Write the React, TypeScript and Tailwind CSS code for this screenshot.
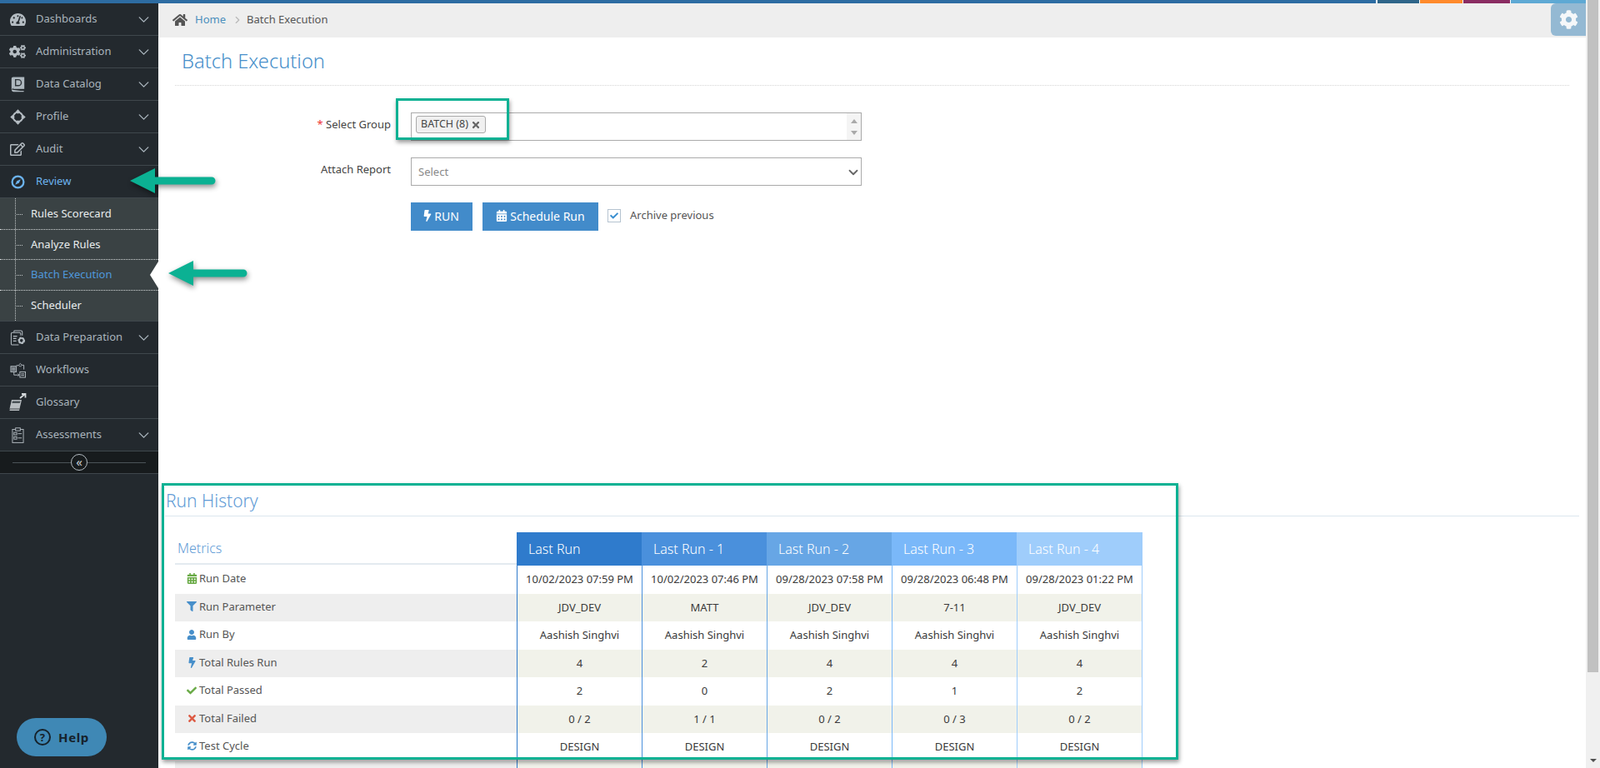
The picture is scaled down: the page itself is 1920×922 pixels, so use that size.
import type { ReactNode } from "react";
import { ChevronDown, ChevronRight } from "lucide-react";
import {
  FaBolt,
  FaCalendarAlt,
  FaCheck,
  FaCog,
  FaCogs,
  FaFilter,
  FaHome,
  FaRegEdit,
  FaSyncAlt,
  FaTachometerAlt,
  FaTimes,
  FaUser,
} from "react-icons/fa";

/* ─────────────────────────────── hand drawn sidebar icons ───────────── */

function BookD() {
  return (
    <svg viewBox="0 0 18 20" className="w-[17px] h-[19px]">
      <path d="M1.500 16.500V2.500a1.500 1.500 0 0 1 1.500-1.500h13.500v14H3.500a1.800 1.800 0 0 0 0 3.600h13" fill="#aeb8bf" stroke="#aeb8bf" strokeWidth="1.300" />
      <path d="M1.500 16.800a1.800 1.800 0 0 1 2-1.800" fill="none" stroke="#23292e" strokeWidth="0.700" />
      <path d="M6 3.800h3.500a3.800 3.800 0 0 1 0 7.600H6z" fill="none" stroke="#2d3338" strokeWidth="1.500" />
    </svg>
  );
}

function ProfileMark() {
  return (
    <svg viewBox="0 0 20 20" className="w-[19px] h-[19px]" fill="currentColor">
      <circle cx="10" cy="10" r="6" fill="none" stroke="currentColor" strokeWidth="2.200" />
      <path d="M10 0.300l2.700 2.900L10 6.100 7.300 3.200zM10 13.900l2.700 2.900-2.700 2.900-2.700-2.900zM0.300 10l2.900-2.700L6.100 10l-2.900 2.700zM13.900 10l2.900-2.700 2.900 2.700-2.900 2.700z" />
    </svg>
  );
}

function CompassMark() {
  return (
    <svg viewBox="0 0 18 18" className="w-[17px] h-[17px]">
      <circle cx="9" cy="9" r="7.300" fill="none" stroke="#6cb3ee" strokeWidth="2.400" />
      <path d="M12.500 5.500L10.300 10.300 5.500 12.500 7.700 7.700z" fill="#6cb3ee" />
    </svg>
  );
}

function DataPrep() {
  return (
    <svg viewBox="0 0 20 20" className="w-[19px] h-[19px]" fill="none" stroke="currentColor" strokeWidth="1.100">
      <path d="M11 19H3a1.500 1.500 0 0 1-1.500-1.500V5A1.500 1.500 0 0 1 3 3.500h9A1.500 1.500 0 0 1 13.500 5v2" />
      <path d="M5 3V2a1 1 0 0 1 1-1h8a1.500 1.500 0 0 1 1.500 1.500V7" />
      <path d="M4 8h5M4 11h4M4 14h4" strokeWidth="1.400" />
      <circle cx="14.500" cy="13.500" r="3.200" stroke="currentColor" strokeWidth="2.600" strokeDasharray="2.200 0.900" />
      <circle cx="14.500" cy="13.500" r="3" strokeWidth="1.600" />
    </svg>
  );
}

function FlowMark() {
  return (
    <svg viewBox="0 0 20 20" className="w-[19px] h-[19px]" fill="none" stroke="currentColor" strokeWidth="1">
      <rect x="1" y="5" width="7" height="7" fill="currentColor" fillOpacity="0.35" />
      <path d="M2.500 7.500h4M2.500 9.500h4" />
      <path d="M11 3.500l2-2 2 2-2 2z" />
      <path d="M8 4h3M15 3.500h2.500V9" />
      <rect x="12.500" y="12" width="7" height="7" />
      <path d="M14 14.500h4M14 16.500h4" />
      <path d="M5 12v4h6.500M10 14.500l1.600 1.500-1.600 1.500" />
    </svg>
  );
}

function GlossaryMark() {
  return (
    <svg viewBox="0 0 24 24" className="w-[24px] h-[24px]">
      <path d="M5 9h12l-3 13H2z" fill="#b9bec2" />
      <path d="M6 10.500h9.500l-.6 2.500H5.400z" fill="#4b5358" />
      <path d="M2 22l.5-2h12" stroke="#23292e" strokeWidth="0.800" fill="none" />
      <path d="M15 7l6-5M17 2h4.500v4.500" stroke="#d5d9dc" strokeWidth="1.800" fill="none" />
    </svg>
  );
}

function ClipboardMark() {
  return (
    <svg viewBox="0 0 16 20" className="w-[15px] h-[19px]" fill="none" stroke="currentColor" strokeWidth="1">
      <rect x="1" y="2.500" width="14" height="17" />
      <rect x="5" y="0.700" width="6" height="3.500" fill="#23292e" />
      <rect x="3" y="6.500" width="3.500" height="3" />
      <rect x="3" y="12" width="3.500" height="3" />
      <path d="M8 8h5M8 13.500h5" />
    </svg>
  );
}

/* ─────────────────────────────── sidebar ────────────────────────────── */

type NavItem = { label: string; icon: ReactNode; caret?: boolean; active?: boolean };

const NAV_TOP: NavItem[] = [
  { label: "Dashboards", icon: <FaTachometerAlt className="text-[19px]" />, caret: true },
  { label: "Administration", icon: <FaCogs className="text-[20px]" />, caret: true },
  { label: "Data Catalog", icon: <BookD />, caret: true },
  { label: "Profile", icon: <ProfileMark />, caret: true },
  { label: "Audit", icon: <FaRegEdit className="text-[18px]" />, caret: true },
  { label: "Review", icon: <CompassMark />, active: true },
];

const NAV_BOTTOM: NavItem[] = [
  { label: "Data Preparation", icon: <DataPrep />, caret: true },
  { label: "Workflows", icon: <FlowMark /> },
  { label: "Glossary", icon: <GlossaryMark /> },
  { label: "Assessments", icon: <ClipboardMark />, caret: true },
];

const SUB_ITEMS = [
  { label: "Rules Scorecard", h: "h-[38px]" },
  { label: "Analyze Rules", h: "h-[36px]" },
  { label: "Batch Execution", h: "h-[37px]", active: true },
  { label: "Scheduler", h: "h-[36px]" },
];

function NavRow({ item }: { item: NavItem }) {
  return (
    <div className="flex items-center h-[39px] border-b border-[#3f474c]">
      <span className="w-[43px] shrink-0 flex justify-center pr-[1px] text-[#b4bcc2]">{item.icon}</span>
      <span className={"flex-1 text-[13px] " + (item.active ? "text-[#6cb3ee]" : "text-[#a9b4bc]")}>{item.label}</span>
      {item.caret && <ChevronDown className="w-[21px] h-[21px] mr-[7px] text-[#a9b4bc]" strokeWidth={1.6} />}
    </div>
  );
}

function Sidebar() {
  return (
    <aside className="relative w-[190px] shrink-0 bg-[#23292e] h-[918px]">
      {NAV_TOP.map((n) => (
        <NavRow key={n.label} item={n} />
      ))}
      <div className="relative border-b border-[#3f474c] bg-[#3a4244]">
        <div className="absolute left-[18px] top-0 bottom-0 border-l border-dotted border-[#c5cacb]" />
        {SUB_ITEMS.map((s, i) => (
          <div
            key={s.label}
            className={
              "relative flex items-center pl-[37px] text-[13px] " +
              s.h +
              " " +
              (i < 3 ? "border-b border-dotted border-[#d5d9da] " : "") +
              (s.active ? "text-[#4f98dc]" : "text-[#e9edee]")
            }
          >
            <span className="absolute left-[20px] top-1/2 w-[7px] border-t border-dotted border-[#c5cacb]" />
            {s.label}
            {s.active && (
              <span className="absolute right-0 top-[2px] border-y-[16px] border-r-[10px] border-y-transparent border-r-white" />
            )}
          </div>
        ))}
      </div>
      {NAV_BOTTOM.map((n) => (
        <NavRow key={n.label} item={n} />
      ))}
      <div className="flex items-center h-[27px] px-[15px] bg-[#171b1d] border-b border-[#3f474c]">
        <span className="flex-1 border-t border-[#4b5358]" />
        <span className="w-[20px] h-[20px] rounded-full border border-[#b4bcc2] flex items-center justify-center text-[15px] leading-none text-[#c6ccd0] pb-[2px]">
          «
        </span>
        <span className="flex-1 border-t border-[#4b5358]" />
      </div>
      <button
        type="button"
        className="absolute left-[20px] top-[858px] w-[108px] h-[46px] rounded-full bg-[#3f88b5] flex items-center justify-center gap-[9px] text-[#16222b] font-['Roboto',sans-serif] font-bold text-[15px] tracking-[0.6px]"
      >
        <span className="w-[20px] h-[20px] rounded-full border-2 border-[#16222b] flex items-center justify-center text-[13px] leading-none">?</span>
        Help
      </button>
    </aside>
  );
}

/* ─────────────────────────────── run history ────────────────────────── */

const COLUMNS = [
  { title: "Last Run", head: "bg-[#2f7bcc]", line: "border-[#2f7bcc]" },
  { title: "Last Run - 1", head: "bg-[#4a90dc]", line: "border-[#4a90dc]" },
  { title: "Last Run - 2", head: "bg-[#67a6e5]", line: "border-[#67a6e5]" },
  { title: "Last Run - 3", head: "bg-[#7ab8f9]", line: "border-[#7ab8f9]" },
  { title: "Last Run - 4", head: "bg-[#9fcdfb]", line: "border-[#9fcdfb]" },
];

const METRICS: { label: string; icon: ReactNode; values: string[] }[] = [
  {
    label: "Run Date",
    icon: <FaCalendarAlt className="text-[13px] text-[#69aa46]" />,
    values: ["10/02/2023 07:59 PM", "10/02/2023 07:46 PM", "09/28/2023 07:58 PM", "09/28/2023 06:48 PM", "09/28/2023 01:22 PM"],
  },
  {
    label: "Run Parameter",
    icon: <FaFilter className="text-[12px] text-[#478fca]" />,
    values: ["JDV_DEV", "MATT", "JDV_DEV", "7-11", "JDV_DEV"],
  },
  {
    label: "Run By",
    icon: <FaUser className="text-[12px] text-[#478fca]" />,
    values: ["Aashish Singhvi", "Aashish Singhvi", "Aashish Singhvi", "Aashish Singhvi", "Aashish Singhvi"],
  },
  {
    label: "Total Rules Run",
    icon: <FaBolt className="text-[13px] text-[#478fca]" />,
    values: ["4", "2", "4", "4", "4"],
  },
  {
    label: "Total Passed",
    icon: <FaCheck className="text-[12px] text-[#69aa46]" />,
    values: ["2", "0", "2", "1", "2"],
  },
  {
    label: "Total Failed",
    icon: <FaTimes className="text-[13px] text-[#dd5a43]" />,
    values: ["0 / 2", "1 / 1", "0 / 2", "0 / 3", "0 / 2"],
  },
  {
    label: "Test Cycle",
    icon: <FaSyncAlt className="text-[11px] text-[#478fca]" />,
    values: ["DESIGN", "DESIGN", "DESIGN", "DESIGN", "DESIGN"],
  },
  { label: "", icon: null, values: ["", "", "", "", ""] },
];

function RunHistory() {
  return (
    <div className="mt-[19px] grid grid-cols-[410px_repeat(4,150px)_151px]">
      <div className="h-[39px] pt-[5px] pl-[3px] border-b-2 border-[#e3eaf0] text-[16px] leading-[28px] font-light text-[#5f9bd6]">
        Metrics
      </div>
      {COLUMNS.map((c) => (
        <div key={c.title} className={"h-[40px] flex items-center pl-[14px] pb-[1px] text-[16px] font-light text-white " + c.head}>
          {c.title}
        </div>
      ))}
      {METRICS.map((m, r) => {
        const grey = r % 2 === 1;
        return [
          <div
            key={"m" + r}
            className={"flex items-center h-[33.5px] text-[13px] text-[#555] pb-[2px] " + (grey ? "bg-[#eeeeee]" : "bg-white")}
          >
            <span className="w-[29px] pl-[11px] flex justify-center shrink-0">{m.icon}</span>
            {m.label}
          </div>,
          ...m.values.map((v, i) => (
            <div
              key={r + "-" + i}
              className={
                "flex items-center justify-center h-[33.5px] text-[13px] text-[#3a3a3a] border-l " +
                COLUMNS[i].line +
                " " +
                (i === 4 ? "border-r " : "") +
                (grey ? "bg-[#f1f2ea]" : "bg-white")
              }
            >
              {v}
            </div>
          )),
        ];
      })}
    </div>
  );
}

/* ─────────────────────────────── annotations ────────────────────────── */

function GreenArrow({ len, className }: { len: number; className: string }) {
  return (
    <svg viewBox={`0 0 ${len} 32`} className={"absolute h-[32px] drop-shadow-[1px_3px_3px_rgba(0,0,0,0.45)] " + className}>
      <path d={`M1 16L31 1v10.500h${len - 36}a4.500 4.500 0 0 1 0 9H31V31z`} fill="#0bb193" />
    </svg>
  );
}

/* ─────────────────────────────── page ───────────────────────────────── */

export default function App() {
  return (
    <div className="relative flex w-[1920px] h-[922px] overflow-hidden bg-white font-['Open_Sans',sans-serif]">
      <div className="w-[1903px] shrink-0">
        <div className="flex h-[4px] gap-[1px] bg-white">
          <div className="flex-1 bg-[#2d6ca2]" />
          <div className="w-[50px] ml-[1px] bg-[#2e6589]" />
          <div className="w-[51px] bg-[#ff8a2b]" />
          <div className="w-[56px] bg-[#8a2c62]" />
          <div className="w-[90px] bg-[#5ea9d4]" />
        </div>
        <div className="flex">
          <Sidebar />
          <main className="flex-1 min-w-0">
            <div className="flex items-center h-[41px] bg-[#eeeeee] pl-[17px] pb-[2px] text-[13px]">
              <FaHome className="text-[18px] text-[#555]" />
              <span className="ml-[9px] text-[#4c8fbd]">Home</span>
              <ChevronRight className="w-[14px] h-[14px] ml-[7px] text-[#b8b8b8]" />
              <span className="ml-[4px] text-[#555]">Batch Execution</span>
            </div>

            <div className="px-[20px]">
              <h1 className="h-[58px] pl-[8px] pt-[10px] text-[23.700px] leading-[36px] font-light text-[#478fca] border-b border-dotted border-[#d5d5d5]">
                Batch Execution
              </h1>

              <div className="mt-[32px] flex h-[34px]">
                <label className="w-[259px] text-right pt-[5px] text-[13px] text-[#444]">
                  <span className="text-[#e33]">*</span> Select Group
                </label>
                <div className="ml-[24px] w-[541px] flex items-start border border-[#aaaaaa] pl-[5px]">
                  <span className="flex items-center gap-[3px] h-[21px] mt-[3px] px-[5px] rounded-[3px] border border-[#aaaaaa] bg-[#f0f0f0] text-[12.500px] text-[#444]">
                    BATCH (8)
                    <FaTimes className="text-[12px] text-[#666]" />
                  </span>
                  <span className="ml-auto w-[17px] h-full bg-[#f4f4f4] flex flex-col items-center justify-center gap-[9px]">
                    <span className="border-x-[4px] border-b-[5px] border-x-transparent border-b-[#a9a9a9]" />
                    <span className="border-x-[4px] border-t-[5px] border-x-transparent border-t-[#a9a9a9]" />
                  </span>
                </div>
              </div>

              <div className="mt-[20px] flex h-[34px]">
                <label className="w-[259px] text-right pt-[5px] text-[13px] text-[#444]">Attach Report</label>
                <div className="ml-[24px] w-[541px] flex items-center border border-[#aaaaaa] pl-[8px] text-[13px] text-[#888] pt-[2px]">
                  Select
                  <ChevronDown className="ml-auto w-[18px] h-[18px] text-[#666]" strokeWidth={2.4} />
                </div>
              </div>

              <div className="mt-[20px] flex items-center h-[34px] pl-[283px]">
                <button type="button" className="flex items-center justify-center gap-[1px] w-[74px] h-[34px] pb-[2px] pr-[3px] bg-[#428bca] text-[14px] text-white">
                  <FaBolt className="text-[14px]" />
                  RUN
                </button>
                <button type="button" className="flex items-center justify-center gap-[3px] ml-[12px] w-[139px] h-[34px] pb-[2px] bg-[#428bca] text-[14px] text-white">
                  <FaCalendarAlt className="text-[14px]" />
                  Schedule Run
                </button>
                <span className="ml-[11px] w-[16px] h-[16px] border border-[#b5c3d0] flex items-center justify-center bg-white -mt-[2px]">
                  <FaCheck className="text-[10px] text-[#3a8fd0]" />
                </span>
                <span className="ml-[11px] text-[13px] text-[#555] -mt-[2px]">Archive previous</span>
              </div>

              <div className="mt-[310px] -mx-[12px] h-[33px] border-b border-[#dce6ee] pl-[1px] text-[21px] leading-[28px] font-light text-[#5f9bd6]">
                Run History
              </div>

              <RunHistory />
            </div>
          </main>
        </div>
      </div>

      <div className="flex-1 flex flex-col bg-[#f0f0f0] pl-[2px] pr-[2px]">
        <div className="h-[807px] bg-[#c1c1c1]" />
        <span className="mt-[104px] self-center border-x-[4px] border-t-[4px] border-x-transparent border-t-[#505050]" />
      </div>

      <div className="absolute left-[1861px] top-[4px] w-[42px] h-[39px] rounded-l-[6px] bg-[#94b9d3] flex items-center justify-center">
        <FaCog className="text-[23px] text-[#f5f7f9]" />
      </div>

      <div className="absolute left-[475px] top-[118px] w-[136px] h-[50px] border-[3px] border-[#0bb193] shadow-[1px_3px_5px_rgba(0,0,0,0.4)]" />
      <div className="absolute left-[194px] top-[580px] w-[1220px] h-[332px] border-[3px] border-[#0bb193] shadow-[1px_3px_5px_rgba(0,0,0,0.4)]" />
      <GreenArrow len={104} className="left-[155px] top-[201px] w-[104px]" />
      <GreenArrow len={96} className="left-[201px] top-[312px] w-[96px]" />
    </div>
  );
}
